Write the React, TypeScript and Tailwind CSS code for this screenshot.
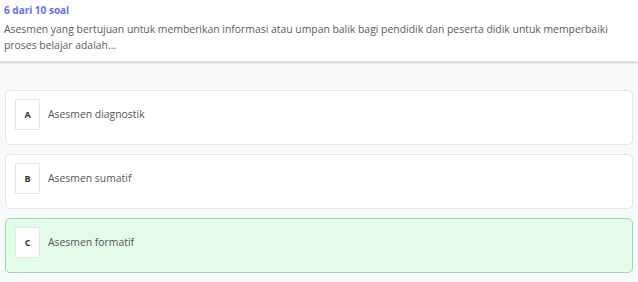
import React from "react";

const options = [
  { letter: "A", text: "Asesmen diagnostik", selected: false },
  { letter: "B", text: "Asesmen sumatif", selected: false },
  { letter: "C", text: "Asesmen formatif", selected: true },
];

export default function App() {
  return (
    <div
      className="w-[638px] h-[282px] bg-[#f8f9fb] overflow-hidden"
      style={{ fontFamily: '"Open Sans", "Liberation Sans", sans-serif' }}
    >
      <div className="bg-white h-[62px] px-[4px] pt-[3px] shadow-[0_1px_2px_rgba(0,0,0,0.18)] border-b border-[#e2e4e6]">
        <div className="text-[10px] font-bold text-[#6272f2] leading-[14px]">6 dari 10 soal</div>
        <div className="text-[10.4px] text-[#5c5c5c] leading-[16px] mt-[4px] pr-[20px]">
          Asesmen yang bertujuan untuk memberikan informasi atau umpan balik bagi pendidik dan peserta didik untuk memperbaiki
          proses belajar adalah...
        </div>
      </div>
      <div className="flex flex-col gap-[9px] px-[5px] pt-[28px]">
        {options.map((o) => (
          <div
            key={o.letter}
            className={`h-[55px] rounded-[5px] border flex items-start pl-[9px] pt-[8px] ${
              o.selected ? "bg-[#e4fbea] border-[#94dca8]" : "bg-white border-[#e6e6e6]"
            }`}
          >
            <div className="w-[25px] h-[31px] border border-[#e8e8e8] bg-white flex items-center justify-center text-[9px] font-bold text-[#333]">
              {o.letter}
            </div>
            <div className="ml-[8px] h-[31px] flex items-center text-[10.4px] text-[#555]">{o.text}</div>
          </div>
        ))}
      </div>
    </div>
  );
}
